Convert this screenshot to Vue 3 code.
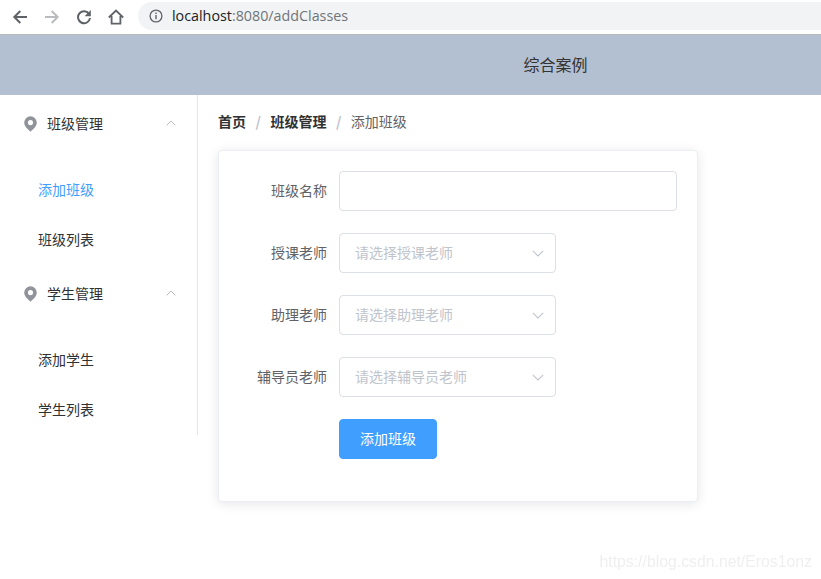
<script setup>
const groups = [
  { title: '班级管理', items: [{ label: '添加班级', active: true }, { label: '班级列表' }] },
  { title: '学生管理', items: [{ label: '添加学生' }, { label: '学生列表' }] },
]
const selects = [
  { label: '授课老师', placeholder: '请选择授课老师' },
  { label: '助理老师', placeholder: '请选择助理老师' },
  { label: '辅导员老师', placeholder: '请选择辅导员老师' },
]
</script>

<template>
  <div class="page">
    <div class="chrome">
      <svg class="nav-icon back" viewBox="0 0 16 16"><path d="M15 8H2.500M8.300 2 2.300 8l6 6" fill="none" stroke="#5f6368" stroke-width="2"/></svg>
      <svg class="nav-icon forward" viewBox="0 0 16 16"><path d="M1 8h12.500M7.700 2l6 6-6 6" fill="none" stroke="#b9bbbe" stroke-width="2"/></svg>
      <svg class="nav-icon reload" viewBox="0 0 16 16"><path d="M13.200 5.200A6 6 0 1 0 14 9" fill="none" stroke="#5f6368" stroke-width="2"/><path d="M14.800 1v6.200H8.600z" fill="#5f6368"/></svg>
      <svg class="nav-icon home" viewBox="0 0 16 16"><path d="M.8 8.500 8 1.500l7.200 7M3.600 7v7.600h8.800V7" fill="none" stroke="#5f6368" stroke-width="1.800"/></svg>
      <div class="address">
        <svg class="info" viewBox="0 0 14 14"><circle cx="7" cy="7" r="5.900" fill="none" stroke="#5f6368" stroke-width="1.300"/><path d="M7 6v4.200M7 3.600v1.400" stroke="#5f6368" stroke-width="1.400"/></svg>
        <span class="host">localhost</span><span class="path">:8080/addClasses</span>
      </div>
    </div>

    <header class="top">综合案例</header>

    <div class="body">
      <aside class="side">
        <section v-for="g in groups" :key="g.title" class="group">
          <div class="group-title">
            <svg class="pin" viewBox="0 0 13 16"><path fill-rule="evenodd" d="M6.500.3A6.300 6.300 0 0 0 .2 6.600c0 3.800 3.700 6.900 6.300 9.100 2.600-2.200 6.300-5.300 6.300-9.100A6.300 6.300 0 0 0 6.500.3Zm0 3.700a2.600 2.600 0 1 1 0 5.200 2.600 2.600 0 0 1 0-5.200Z" fill="#909399"/></svg>
            <span class="group-name">{{ g.title }}</span>
            <svg class="caret" viewBox="0 0 10 6"><path d="M.7 5.300 5 1l4.300 4.300" fill="none" stroke="#b6b9bf" stroke-width="1"/></svg>
          </div>
          <ul class="items">
            <li v-for="i in g.items" :key="i.label" :class="{ active: i.active }">{{ i.label }}</li>
          </ul>
        </section>
      </aside>

      <main class="main">
        <nav class="crumbs">
          <b>首页</b><i>/</i><b>班级管理</b><i>/</i><span>添加班级</span>
        </nav>
        <div class="card">
          <div class="row">
            <label>班级名称</label>
            <div class="field wide"></div>
          </div>
          <div v-for="s in selects" :key="s.label" class="row">
            <label>{{ s.label }}</label>
            <div class="field select">
              <span>{{ s.placeholder }}</span>
              <svg viewBox="0 0 12 7"><path d="M.8.8 6 6l5.200-5.200" fill="none" stroke="#c0c4cc" stroke-width="1.100"/></svg>
            </div>
          </div>
          <div class="row">
            <label></label>
            <button type="button"><span>添加班级</span></button>
          </div>
        </div>
      </main>
    </div>

    <div class="watermark">https://blog.csdn.net/Eros1onz</div>
  </div>
</template>

<style>
html, body { margin: 0; background: #fff; overflow: hidden; }
</style>

<style scoped>
.page {
  position: relative;
  width: 821px;
  height: 579px;
  overflow: hidden;
  font-family: "Noto Sans CJK SC", "Liberation Sans", sans-serif;
  font-size: 14px;
  color: #303133;
  background: #fff;
}
.chrome {
  height: 35px;
  display: flex;
  align-items: center;
  box-sizing: border-box;
  border-bottom: 1px solid #b9b9b9;
  background: #fff;
}
.nav-icon { width: 16px; height: 16px; flex: none; margin-top: -1px; }
.back { margin-left: 12px; }
.forward { margin-left: 16px; }
.reload { margin-left: 16px; }
.home { margin-left: 16px; }
.address {
  flex: 1;
  height: 28px;
  margin-top: -2px;
  margin-left: 14px;
  display: flex;
  align-items: center;
  padding-left: 11px;
  background: #f1f3f4;
  border-radius: 14px 0 0 14px;
  font-family: "Open Sans", sans-serif;
  font-size: 14.3px;
}
.info { width: 14px; height: 14px; margin-right: 9px; }
.host { color: #202124; margin-top: -2px; }
.path { color: #70757a; margin-top: -2px; }
.top {
  height: 60px;
  background: #b3c0d1;
  display: flex;
  align-items: center;
  justify-content: center;
  padding-left: 290px;
  padding-bottom: 2px;
  font-size: 16px;
  color: #333;
  box-sizing: border-box;
}
.body { display: flex; align-items: flex-start; }
.side { width: 198px; height: 340px; box-sizing: border-box; border-right: 1px solid #e6e6e6; flex: none; }
.group-title { height: 56px; display: flex; align-items: center; padding: 0 21px 0 24px; box-sizing: border-box; }
.pin { width: 13px; height: 16px; flex: none; margin-top: 1px; }
.group-name { margin-left: 10px; flex: 1; line-height: 20px; }
.caret { width: 10px; height: 6px; margin-top: -1px; }
.items { list-style: none; margin: 0; padding: 14px 0 0; }
.items li { height: 50px; line-height: 48px; padding-left: 38px; }
.items li.active { color: #409eff; }
.main { flex: 1; padding: 15px 20px; min-width: 0; }
.crumbs { display: flex; align-items: center; height: 22px; line-height: 22px; margin-bottom: 18px; }
.crumbs b { font-weight: 700; color: #303133; }
.crumbs i { font-style: normal; font-weight: 700; color: #c0c4cc; margin: 0 9.5px; }
.crumbs span { color: #606266; }
.card {
  width: 480px;
  box-sizing: border-box;
  padding: 20px;
  background: #fff;
  border: 1px solid #ebeef5;
  border-radius: 4px;
  box-shadow: 0 2px 12px 0 rgba(0, 0, 0, 0.1);
}
.row { display: flex; height: 40px; margin-bottom: 22px; }
label { width: 100px; box-sizing: border-box; padding-right: 12px; text-align: right; line-height: 38px; color: #606266; flex: none; }
.field { box-sizing: border-box; height: 40px; border: 1px solid #dcdfe6; border-radius: 4px; background: #fff; }
.wide { width: 338px; }
.select { width: 217px; display: flex; align-items: center; justify-content: space-between; padding: 0 11px 0 15px; color: #c0c4cc; }
.select span { margin-top: -2px; }
.select svg { width: 12px; height: 7px; }
button {
  width: 98px;
  height: 40px;
  padding: 0 0 2px;
  border: 1px solid #409eff;
  border-radius: 4px;
  background: #409eff;
  color: #fff;
  font: inherit;
}
.watermark {
  position: absolute;
  right: 9px;
  bottom: 8px;
  font-family: "Liberation Sans", sans-serif;
  font-size: 15.8px;
  color: #efefef;
  filter: blur(0.5px);
}
</style>
